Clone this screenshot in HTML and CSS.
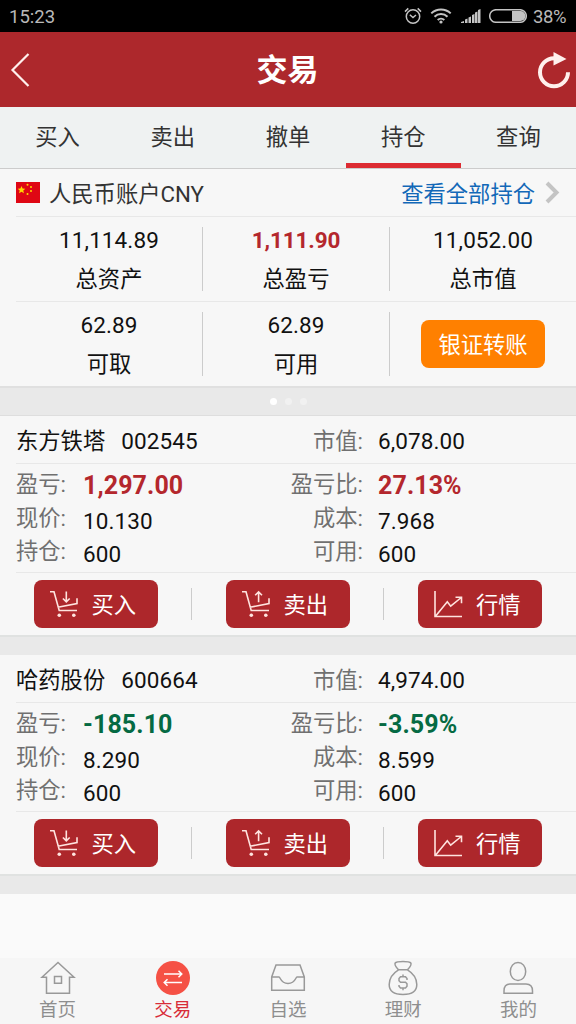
FILE: index.html
```html
<!DOCTYPE html>
<html lang="zh-CN">
    <head>
        <meta charset="utf-8">
        <title>交易</title>
        <link rel="stylesheet" href="styles.css">
    </head>
    <body>
        <svg class="defs" width="0" height="0">
            <symbol id="cart-in" viewBox="0 0 30 28">
                <path d="M1 1.700h4l5.200 18.800H28M8.800 17.300L28 13.500V8.300" />
                <path d="M17.300 1.500v10.300M13.900 8.500l3.400 3.400 3.400-3.400" />
                <circle class="dot" cx="10.300" cy="25.300" r="1.800" /><circle class="dot" cx="24.800" cy="25.300" r="1.800" />
            </symbol>
            <symbol id="cart-out" viewBox="0 0 30 28">
                <path d="M1 1.700h4l5.200 18.800H28M8.800 17.300L28 13.500V8.300" />
                <path d="M17.600 12.300V2M14.200 5.300l3.400-3.400L21 5.300" />
                <circle class="dot" cx="10.300" cy="25.300" r="1.800" /><circle class="dot" cx="24.800" cy="25.300" r="1.800" />
            </symbol>
            <symbol id="chart" viewBox="0 0 30 28">
                <path d="M2 1v25.500h27M2.700 26l11.600-14.300 3.400 4.500L28.300 7.500M22.500 7.200h6v6" />
            </symbol>
        </svg>

        <!-- 状态栏 -->
        <div class="status">
            <span class="time">15:23</span>
            <svg class="alarm" width="18" height="18" viewBox="0 0 18 18">
                <circle cx="9" cy="9.5" r="6.7" /><path d="M5.8 7.8L9 10.6l3-2.6M1 4.6L4.3 1.4M17 4.6l-3.3-3.2" />
            </svg>
            <svg class="wifi" width="22" height="16" viewBox="0 0 22 16">
                <path d="M1.3 5.4a14 14 0 0 1 19.4 0M4.5 8.8a9.2 9.2 0 0 1 13 0M7.7 12a4.7 4.7 0 0 1 6.6 0" />
                <circle cx="11" cy="14" r="1.6" />
            </svg>
            <svg class="signal" width="20" height="14" viewBox="0 0 20 14">
                <path d="M0 14v-1l3-1v2zM4 14v-3.500l2.500-1V14zM7.500 14V8.500l2.500-1V14zM11 14V6l2.500-1v9zM14 14V3.500l2.500-1V14zM17 14V1l2.500-1v14z" />
            </svg>
            <svg class="battery" width="38" height="14" viewBox="0 0 38 14">
                <rect x=".7" y=".7" width="36.600" height="12.600" rx="6.300" />
                <path d="M23 2h8.500a5 5 0 0 1 0 10H23z" />
            </svg>
            <span class="percent">38%</span>
        </div>

        <div class="header">
            <svg class="back" width="20" height="34" viewBox="0 0 20 34"><path d="M18.500 1L2.500 17l16 16" /></svg>
            <h1>交易</h1>
            <svg class="refresh" width="34" height="38" viewBox="0 0 34 38">
                <path d="M17 7.200A14 14 0 1 0 31 21.200" />
                <path class="arrow" d="M16.500 1v13.500L29.500 8z" />
            </svg>
        </div>

        <ul class="tabs">
            <li>买入</li>
            <li>卖出</li>
            <li>撤单</li>
            <li class="active">持仓</li>
            <li>查询</li>
        </ul>

        <!-- 账户 -->
        <div class="account">
            <svg class="flag" width="24" height="21" viewBox="0 0 24 21">
                <rect width="24" height="21" />
                <path d="M5.500 4l1.100 2.400 2.700.3-2 1.800.6 2.700-2.400-1.400-2.400 1.400.6-2.700-2-1.800 2.700-.3z" />
                <circle cx="11.500" cy="2.800" r="1" /><circle cx="15" cy="5" r="1" /><circle cx="15" cy="9" r="1" /><circle cx="11.500" cy="12" r="1" />
            </svg>
            <span class="account-name">人民币账户CNY</span>
            <a class="all">查看全部持仓</a>
            <svg class="more" width="15" height="23" viewBox="0 0 15 23"><path d="M2 2l9.500 9.500L2 21" /></svg>
        </div>
        <div class="stats">
            <div class="stat"><span>11,114.89</span><b>总资产</b></div>
            <div class="stat"><span class="sum red">1,111.90</span><b>总盈亏</b></div>
            <div class="stat"><span>11,052.00</span><b>总市值</b></div>
        </div>
        <div class="stats">
            <div class="stat"><span>62.89</span><b>可取</b></div>
            <div class="stat"><span>62.89</span><b>可用</b></div>
            <div class="stat"><button class="transfer">银证转账</button></div>
        </div>
        <div class="dots"><i class="on"></i><i></i><i></i></div>

        <!-- 持仓列表 -->
        <div class="stock">
            <div class="row title">
                <span class="name">东方铁塔<em>002545</em></span>
                <span class="label">市值:</span><span class="value">6,078.00</span>
            </div>
            <div class="detail">
                <div class="row">
                    <span class="label">盈亏:</span><span class="value big red">1,297.00</span>
                    <span class="label">盈亏比:</span><span class="value big red">27.13%</span>
                </div>
                <div class="row">
                    <span class="label">现价:</span><span class="value">10.130</span>
                    <span class="label">成本:</span><span class="value">7.968</span>
                </div>
                <div class="row">
                    <span class="label">持仓:</span><span class="value">600</span>
                    <span class="label">可用:</span><span class="value">600</span>
                </div>
            </div>
            <div class="actions">
                <div><button class="btn"><svg><use href="#cart-in" /></svg>买入</button></div>
                <div><button class="btn"><svg><use href="#cart-out" /></svg>卖出</button></div>
                <div><button class="btn"><svg><use href="#chart" /></svg>行情</button></div>
            </div>
        </div>
        <div class="stock">
            <div class="row title">
                <span class="name">哈药股份<em>600664</em></span>
                <span class="label">市值:</span><span class="value">4,974.00</span>
            </div>
            <div class="detail">
                <div class="row">
                    <span class="label">盈亏:</span><span class="value big green">-185.10</span>
                    <span class="label">盈亏比:</span><span class="value big green">-3.59%</span>
                </div>
                <div class="row">
                    <span class="label">现价:</span><span class="value">8.290</span>
                    <span class="label">成本:</span><span class="value">8.599</span>
                </div>
                <div class="row">
                    <span class="label">持仓:</span><span class="value">600</span>
                    <span class="label">可用:</span><span class="value">600</span>
                </div>
            </div>
            <div class="actions">
                <div><button class="btn"><svg><use href="#cart-in" /></svg>买入</button></div>
                <div><button class="btn"><svg><use href="#cart-out" /></svg>卖出</button></div>
                <div><button class="btn"><svg><use href="#chart" /></svg>行情</button></div>
            </div>
        </div>

        <!-- 底部导航 -->
        <ul class="nav">
            <li>
                <svg viewBox="0 0 36 36"><path d="M6.500 33.300V17.200H2L18 2.500l16 14.700h-4.500v16.100zM14.500 16.500h7v6.800h-7z" /></svg>
                首页
            </li>
            <li class="active">
                <svg viewBox="0 0 36 36"><circle cx="18" cy="18" r="17" /><path d="M9 14h17.500M23.500 10.700l3.300 3.300-3.300 3.300M27 22.500H9.500M12.500 19.200l-3.300 3.300 3.300 3.300" /></svg>
                交易
            </li>
            <li>
                <svg viewBox="0 0 36 36"><path d="M6 5h24l4.300 12v13.300H1.700V17zM1.700 17H9c1.500 0 1.500 6.500 9 6.500s7.500-6.500 9-6.500h7.300" /></svg>
                自选
            </li>
            <li>
                <svg viewBox="0 0 36 36">
                    <path d="M13.500 9.800C11 7 9 5 10.200 3c1-1.500 3.800-1.500 7.800-1.500s6.800 0 7.800 1.500c1.200 2-.8 4-3.300 6.800zM13.500 9.800C7.500 13.500 4.200 19 4.200 24.500c0 7 6 10 13.800 10s13.800-3 13.800-10c0-5.500-3.300-11-9.300-14.700" />
                    <path d="M22 20v-1.500l-1.500-1.800h-5L14 18.500v2.300l1.500 1.500h5l1.500 1.500v2.500L20.500 28h-5L14 26.300V25M18 14.500v2M18 28v2.300" />
                </svg>
                理财
            </li>
            <li>
                <svg viewBox="0 0 36 36"><path d="M18 2.500c4.500 0 7.700 4 7.700 9s-3.200 9-7.700 9-7.700-4-7.700-9 3.200-9 7.700-9z" /><path d="M4 33.300V31c0-4.500 2-7 6-7h16c4 0 6.500 2.500 6.500 7v2.300z" /></svg>
                我的
            </li>
        </ul>
    </body>
</html>
```
FILE: styles.css
```css
* {
    box-sizing: border-box;
}
body {
    margin: 0;
    height: 1024px;
    display: flex;
    flex-direction: column;
    background-color: #fafafa;
    color: #111;
    font-family: Roboto, "Noto Sans CJK SC", sans-serif;
    font-size: 22.3px;
    line-height: 32px;
}
ul {
    list-style: none;
    margin: 0;
    padding: 0;
    display: flex;
}
svg {
    fill: none;
    flex: none;
}
.defs {
    display: none;
}
b, em {
    font-weight: normal;
    font-style: normal;
}
button {
    border: 0;
    padding: 0;
    color: #fff;
    font: inherit;
    border-radius: 8px;
}
.red {
    color: #b4272d;
}
.green {
    color: #056a43;
}
/* 状态栏 */
.status {
    height: 32px;
    background-color: #000;
    color: #b9b9b9;
    display: flex;
    align-items: center;
    padding: 0 8px 0 9px;
    font-size: 18.5px;
    stroke: #c4c4c4;
    stroke-width: 1.5;
}
.status span {
    stroke: none;
}
.time {
    flex: 1;
    padding-top: 2px;
}
.percent {
    width: 35px;
    padding-top: 2px;
    letter-spacing: -.4px;
}
.wifi {
    margin: 0 9px 0 8px;
    stroke-width: 2;
}
.wifi circle, .signal, .battery path {
    fill: #c4c4c4;
    stroke: none;
}
.battery {
    margin: 0 6px 0 8px;
}
/* 标题 */
.header {
    height: 75px;
    padding: 0 5px 0 10px;
    background-color: #ad282c;
    display: flex;
    align-items: center;
    justify-content: space-between;
    stroke: #fff0ed;
    stroke-width: 2.2;
}
.header h1 {
    margin: 2px 0 0 8px;
    font-size: 31px;
    font-weight: bold;
    color: #fff;
    stroke: none;
}
.refresh {
    stroke-width: 4;
}
.arrow {
    fill: #fff0ed;
    stroke: none;
}
.tabs {
    height: 62px;
    background-color: #eff2f2;
    border-bottom: 1px solid #ccc;
    color: #333;
}
.tabs li {
    flex: 1;
    padding-top: 14px;
    text-align: center;
}
.tabs .active {
    border-bottom: 5px solid #dc2b32;
}
/* 账户 */
.account {
    height: 47px;
    padding: 2px 16px 0;
    background-color: #f7f7f7;
    display: flex;
    align-items: center;
}
.flag {
    margin-bottom: 3px;
    fill: #ffd800;
}
.flag rect {
    fill: #df0714;
}
.account-name {
    flex: 1;
    margin-left: 9px;
    color: #333;
}
.all {
    color: #1268b8;
    margin-right: 10px;
}
.more {
    margin-bottom: 2px;
    stroke: #c4c4c4;
    stroke-width: 4;
}
.stats {
    height: 85px;
    padding-left: 16px;
    background: linear-gradient(#e8e8e8, #e8e8e8) 16px 0 / 100% 1px no-repeat #f7f7f7;
    display: grid;
    grid-template-columns: 186px 187px 1fr;
    align-items: center;
}
.stat {
    height: 64px;
    padding-top: 2px;
    display: flex;
    flex-direction: column;
    align-items: center;
    justify-content: center;
    gap: 1px;
    border-left: 1px solid #ccc;
}
.stat:first-child {
    border-left: 0;
}
.stat span, .stat b {
    line-height: 38px;
}
.stat span, .value, em {
    font-size: 22.5px;
    letter-spacing: .1px;
}
.stat .sum {
    font-weight: bold;
    letter-spacing: -.1px;
}
.transfer {
    width: 124px;
    height: 48px;
    margin-top: -2px;
    padding-top: 2px;
    background-color: #ff8000;
}
.dots {
    height: 30px;
    background-color: #e9e9e9;
    border-top: 2px solid #e0e0e0;
    border-bottom: 1px solid #dedede;
    display: flex;
    align-items: center;
    justify-content: center;
    gap: 8px;
}
.dots i {
    width: 7px;
    height: 7px;
    border-radius: 50%;
    background-color: #f1f1f1;
}
.dots .on {
    background-color: #fff;
}
/* 持仓 */
.stock {
    height: 239px;
    background-color: #f7f7f7;
    border-bottom: 18px solid #e9e9e9;
}
.row {
    display: grid;
    grid-template-columns: 52px 201px 64px 1fr;
    column-gap: 15px;
    margin-left: 16px;
    height: 33.5px;
}
.title {
    height: 47px;
    padding-top: 9px;
}
.name {
    grid-column: 1 / 3;
}
em {
    margin-left: 16px;
}
.label {
    color: #707070;
    white-space: nowrap;
}
.row .label:nth-last-child(2) {
    justify-self: end;
}
.detail {
    height: 110px;
    margin-left: 16px;
    padding-top: 4px;
    border-top: 1px solid #e8e8e8;
    border-bottom: 1px solid #e8e8e8;
}
.detail .row {
    margin-left: 0;
}
.detail .value {
    padding-top: 3px;
}
.detail .big {
    padding-top: 2px;
    font-size: 25px;
    font-weight: bold;
}
.actions {
    height: 64px;
    display: grid;
    grid-template-columns: repeat(3, 1fr);
    align-items: center;
    border-bottom: 2px solid #e0e2e1;
}
.actions div {
    height: 32px;
    display: flex;
    align-items: center;
    justify-content: center;
    border-right: 1px solid #ccc;
}
.actions div:last-child {
    border-right: 0;
}
.btn {
    width: 124px;
    height: 48px;
    background-color: #ad272b;
    display: flex;
    align-items: center;
    padding: 2px 0 0 15px;
}
.btn svg {
    width: 30px;
    height: 28px;
    margin: 0 13px 2px 0;
    stroke: #ffe4df;
    stroke-width: 1.6;
}
.dot {
    fill: #ffe4df;
    stroke: none;
}
/* 底部导航 */
.nav {
    height: 66px;
    margin-top: auto;
    background-color: #f6f6f6;
    color: #8e8e8e;
    font-size: 18.5px;
    line-height: 28px;
}
.nav li {
    flex: 1;
    display: flex;
    flex-direction: column;
    align-items: center;
    padding-top: 2px;
}
.nav svg {
    width: 36px;
    height: 36px;
    stroke: #999;
    stroke-width: 1.5;
}
.nav .active {
    color: #d82c38;
}
.nav circle {
    fill: #f55145;
    stroke: none;
}
.nav .active path {
    stroke: #fff;
}
```
